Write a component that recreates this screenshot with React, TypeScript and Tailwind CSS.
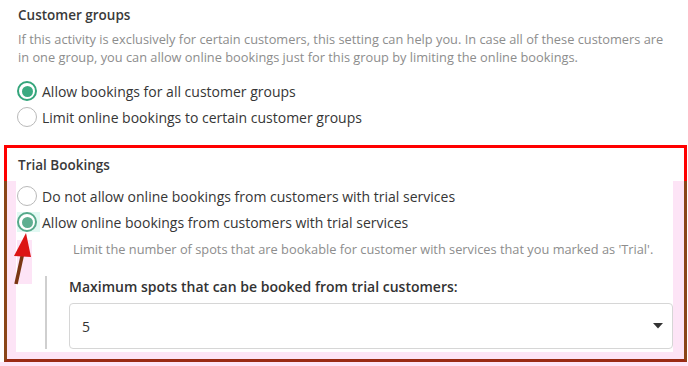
const font = { fontFamily: '"Open Sans", "Noto Sans", sans-serif' };

type RadioProps = { checked?: boolean; muted?: boolean; label: string; highlight?: boolean };

const Radio = ({ checked, muted, label, highlight }: RadioProps) => (
    <label className="flex items-center h-[26px]">
        <span className={`flex items-center w-[23px] h-[20px] ${highlight ? "bg-[#e2f9f3]" : ""}`}>
            {checked ? (
                <span className={`flex items-center justify-center w-[20px] h-[20px] rounded-full border-[2.5px] bg-white ${muted ? "border-[#55a98a]" : "border-[#34a57b]"}`}>
                    <span className={`w-[11px] h-[11px] rounded-full ${muted ? "bg-[#5eae90]" : "bg-[#3aaa80]"}`} />
                </span>
            ) : (
                <span className="w-[20px] h-[20px] rounded-full border-[1.5px] border-[#b9b9b9] bg-white" />
            )}
        </span>
        <span className="ml-[2px] text-[14px] text-[#363636]">{label}</span>
    </label>
);

const App = () => {
    return (
        <div className="relative w-[688px] h-[366px] bg-white overflow-hidden" style={font}>
            <div className="pl-[18px] pt-[5px]">
                <h2 className="text-[13.5px] leading-[20px] font-semibold text-[#3a3a3a]">Customer groups</h2>
                <p className="mt-[5px] text-[12.8px] leading-[18px] text-[#8d8d8d] pr-[14px]">
                    If this activity is exclusively for certain customers, this setting can help you. In case all of these customers are in one group, you can allow online bookings just for this group by limiting the online bookings.
                </p>
                <div className="mt-[12px] flex flex-col -ml-[1px]">
                    <Radio checked label="Allow bookings for all customer groups" />
                    <Radio label="Limit online bookings to certain customer groups" />
                </div>
            </div>

            {/* annotated box */}
            <div className="ml-[4px] mt-[15px] w-[683px]">
                <div className="h-[36px] border-t-[3px] border-l-[3px] border-r-[3px] border-[#ff0000] pl-[11px] pt-[7px]">
                    <h3 className="text-[13.5px] leading-[20px] font-semibold text-[#3a3a3a]">Trial Bookings</h3>
                </div>
                <div className="border-l-[3px] border-r-[3px] border-[#8a4518] border-b-[3px] border-b-[#9a2a14] bg-[#fde4f6] pl-[9px] pr-[11px] pb-[7px]">
                    <div className="bg-white pt-[2px] pb-[3px]">
                        <div className="pl-[1px]">
                            <Radio label="Do not allow online bookings from customers with trial services" />
                            <Radio checked muted highlight label="Allow online bookings from customers with trial services" />
                        </div>
                        <p className="mt-[5px] ml-[57px] text-[12.8px] leading-[18px] text-[#8d8d8d]">
                            Limit the number of spots that are bookable for customer with services that you marked as 'Trial'.
                        </p>
                        <div className="mt-[18px] ml-[29px] border-l-2 border-[#cfcfcf] pl-[22px]">
                            <div className="text-[14px] leading-[22px] font-semibold text-[#333]">
                                Maximum spots that can be booked from trial customers:
                            </div>
                            <div className="mt-[5px] h-[46px] flex items-center justify-between rounded-[4px] border border-[#d6d6d6] pl-[12px] pr-[9px]">
                                <span className="text-[14px] text-[#333]">5</span>
                                <svg width="10" height="6" viewBox="0 0 10 6">
                                    <path d="M0 0 L10 0 L5 5.5 Z" fill="#333" />
                                </svg>
                            </div>
                        </div>
                    </div>
                </div>
            </div>
            <div className="h-[7px] bg-[#fde4f6]" />

            {/* arrow annotation */}
            <svg className="absolute left-0 top-0 pointer-events-none" width="60" height="300" viewBox="0 0 60 300">
                <rect x="17" y="240" width="15" height="44" fill="#fde4f6" />
                <line x1="16" y1="284" x2="23" y2="252" stroke="#7a3612" strokeWidth="3.5" />
                <path d="M26 233 L14 256 L31 257 Z" fill="#dc1414" />
            </svg>
        </div>
    );
};

export default App;
